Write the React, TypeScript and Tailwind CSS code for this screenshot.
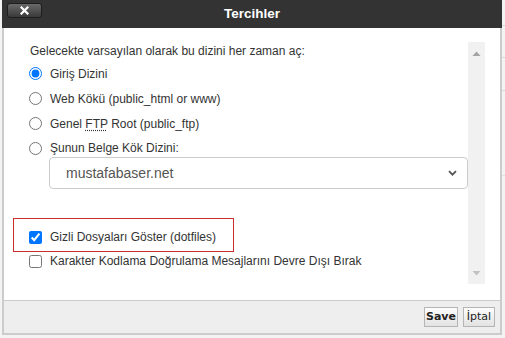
import React from "react";

function Radio({ checked, label }: { checked?: boolean; label: React.ReactNode }) {
  return (
    <label className="flex items-center h-full">
      <input type="radio" name="dir" defaultChecked={checked} className="w-[13px] h-[13px] m-0 shrink-0" />
      <span className="ml-[8px]">{label}</span>
    </label>
  );
}

export default function App() {
  return (
    <div className="w-[505px] h-[338px] bg-[#f3f3f3] relative overflow-hidden font-['Liberation_Sans',Arial,sans-serif] text-[12px] text-[#333]">
      {/* background page lines peeking on the right */}
      <div className="absolute left-[502px] top-[25px] w-[3px] h-px bg-[#d8d8d8]" />
      <div className="absolute left-[502px] top-[57px] w-[3px] h-px bg-[#d8d8d8]" />
      <div className="absolute left-[502px] top-[90px] w-[3px] h-px bg-[#d8d8d8]" />
      <div className="absolute left-[502px] top-[175px] w-[3px] h-px bg-[#e0e0e0]" />

      <div className="ml-[2px] w-[500px] flex flex-col">
        {/* Header */}
        <div className="h-[28px] bg-[#333333] relative flex items-center justify-center">
          <div className="absolute left-[5px] top-[3px] w-[35px] h-[15px] rounded-[3px] border border-[#1e1e1e] bg-gradient-to-b from-[#6a6a6a] to-[#3a3a3a] flex items-center justify-center">
            <svg width="9" height="9" viewBox="0 0 9 9">
              <path d="M1.5 1.5 L7.5 7.5 M7.5 1.5 L1.5 7.5" stroke="#fff" strokeWidth="2.2" strokeLinecap="square" />
            </svg>
          </div>
          <span className="text-white font-bold text-[13.5px] mt-[1px]">Tercihler</span>
        </div>

        <div className="border-x-2 border-b-2 border-[#cccccc]">
          {/* Body */}
          <div className="h-[272px] bg-white pt-[14px] pr-[15px] flex">
            <div className="flex-1 h-[242px] pl-[25px] flex flex-col">
              <div className="h-[19px] leading-[18px] pl-[1px]">Gelecekte varsayılan olarak bu dizini her zaman aç:</div>
              <div className="h-[25px]"><Radio checked label="Giriş Dizini" /></div>
              <div className="h-[25px]"><Radio label="Web Kökü (public_html or www)" /></div>
              <div className="h-[25px]">
                <Radio
                  label={
                    <>
                      Genel <span className="underline decoration-dotted underline-offset-2">FTP</span> Root (public_ftp)
                    </>
                  }
                />
              </div>
              <div className="h-[22px] mt-[1px]"><Radio label="Şunun Belge Kök Dizini:" /></div>
              <div className="ml-[20px] mt-[-2px] h-[32px] border border-[#cccccc] rounded-[4px] flex items-center justify-between pl-[16px] pr-[10px] text-[14px] text-[#555]">
                <span>mustafabaser.net</span>
                <svg width="9" height="6" viewBox="0 0 9 6">
                  <path d="M1 1.2 L4.5 4.7 L8 1.2" fill="none" stroke="#555" strokeWidth="1.8" />
                </svg>
              </div>
              <div className="mt-[36px] h-[24px] relative">
                <div className="absolute left-[-16px] top-[-7px] w-[221px] h-[34px] border border-[#c9302c]" />
                <label className="flex items-center h-full">
                  <input type="checkbox" defaultChecked className="w-[13px] h-[13px] m-0 shrink-0" />
                  <span className="ml-[8px]">Gizli Dosyaları Göster (dotfiles)</span>
                </label>
              </div>
              <div className="h-[24px]">
                <label className="flex items-center h-full">
                  <input type="checkbox" className="w-[13px] h-[13px] m-0 shrink-0" />
                  <span className="ml-[8px]">Karakter Kodlama Doğrulama Mesajlarını Devre Dışı Bırak</span>
                </label>
              </div>
            </div>
            {/* Scrollbar */}
            <div className="w-[17px] h-[242px] bg-[#f1f1f1] flex flex-col items-center justify-between pt-[9px] pb-[8px]">
              <svg width="9" height="5" viewBox="0 0 9 5"><path d="M0.5 5 L4.5 0.5 L8.5 5 Z" fill="#a3a3a3" /></svg>
              <svg width="9" height="5" viewBox="0 0 9 5"><path d="M0.5 0 L4.5 4.5 L8.5 0 Z" fill="#c2c2c2" /></svg>
            </div>
          </div>

          {/* Footer */}
          <div className="h-[33px] border-t border-[#cccccc] bg-[#eeeeee] flex items-center justify-end pr-[5px] gap-[5px] font-['DejaVu_Sans',Verdana,sans-serif] text-[11px] text-[#222]">
            <button className="h-[20px] w-[34px] border border-[#b5b5b5] bg-gradient-to-b from-[#fdfdfd] to-[#e2e2e2] font-bold flex items-center justify-center">Save</button>
            <button className="h-[20px] w-[32px] border border-[#b5b5b5] bg-gradient-to-b from-[#fdfdfd] to-[#e2e2e2] flex items-center justify-center">İptal</button>
          </div>
        </div>
      </div>
    </div>
  );
}
